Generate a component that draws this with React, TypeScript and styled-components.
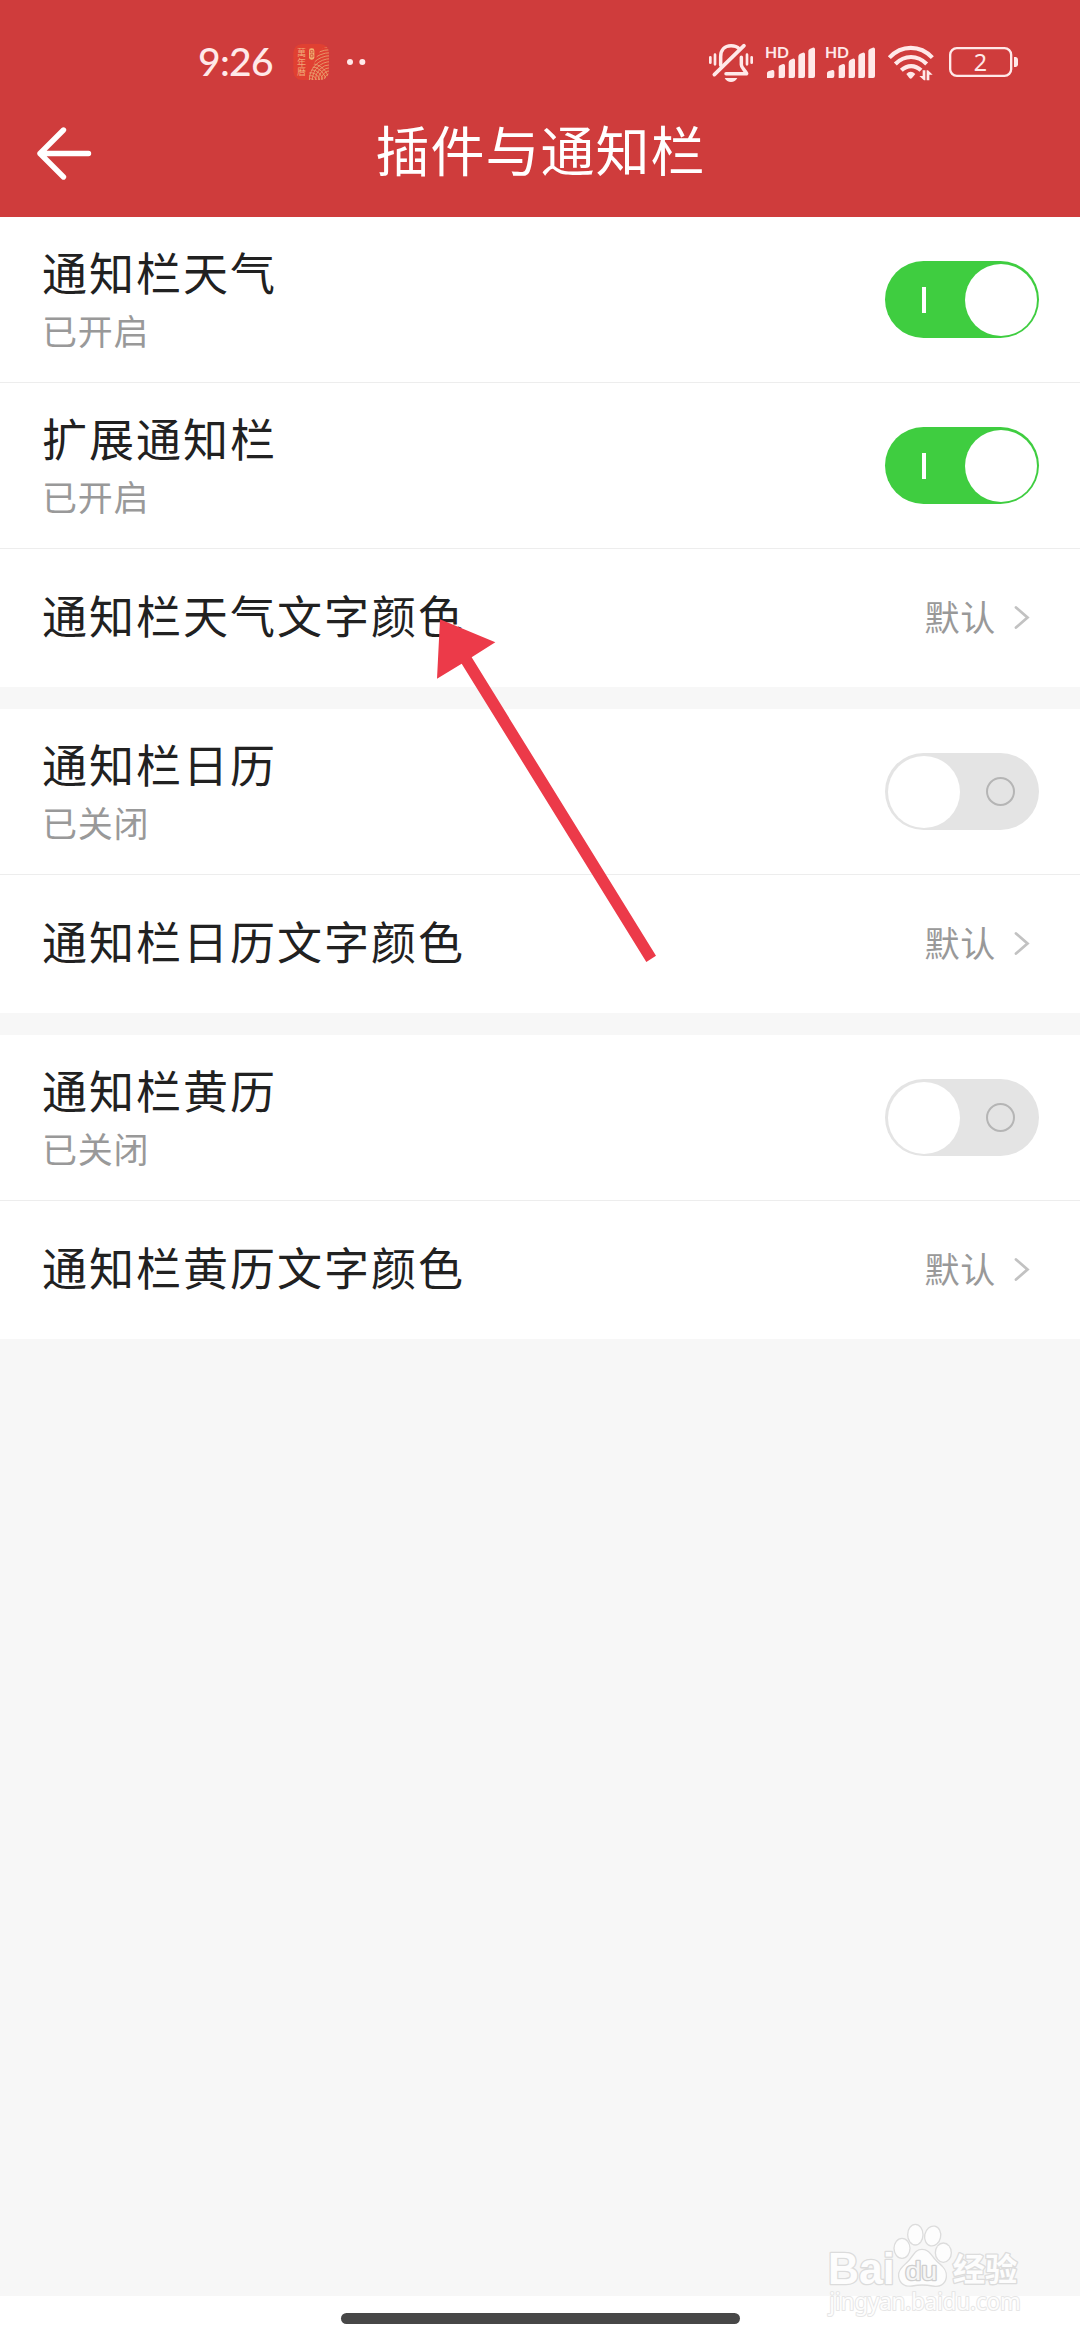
import React from "react";
import styled, { createGlobalStyle } from "styled-components";

const sans = `"Noto Sans CJK SC", "Noto Sans", sans-serif`;
const ink = "#ffe9e9";

const GlobalStyle = createGlobalStyle`
  * { box-sizing: border-box; }
  body { margin: 0; background: #f7f7f7; font-family: ${sans}; }
`;

const Screen = styled.div`
  position: relative;
  width: 1080px;
  height: 2340px;
  display: flex;
  flex-direction: column;
  background: #f7f7f7;
  overflow: hidden;
`;

const Header = styled.header`
  height: 217px;
  background: #cf3c3c;
  display: flex;
  flex-direction: column;
`;

const StatusBar = styled.div`
  height: 100px;
  padding: 30px 60px 0 198px;
  display: flex;
  align-items: flex-start;
`;

const Clock = styled.span`
  width: 92px;
  height: 70px;
  font: 500 39px/62px Lato, sans-serif;
  letter-spacing: -0.7px;
  color: ${ink};
`;

const StatusGlyph = styled.svg<{ $width: number; $gap?: number }>`
  display: block;
  flex: none;
  width: ${(p) => p.$width}px;
  height: 70px;
  margin-left: ${(p) => p.$gap ?? 0}px;
`;

const Spacer = styled.div`
  flex: 1;
`;

const TitleBar = styled.div`
  height: 117px;
  display: grid;
  grid-template-columns: 120px 1fr 120px;
`;

const BackButton = styled.button`
  padding: 23px 0 0 33px;
  border: 0;
  background: none;
  display: flex;
  align-items: flex-start;
`;

const Title = styled.h1`
  margin: 0;
  padding-left: 1px;
  text-align: center;
  font: 400 54px/98px ${sans};
  letter-spacing: 1px;
  color: #fff;
`;

const Main = styled.main`
  flex: 1;
  display: flex;
  flex-direction: column;
  gap: 22px;
`;

const Group = styled.section`
  background: #fff;
  display: flex;
  flex-direction: column;
`;

const Row = styled.div<{ $tall?: boolean }>`
  height: ${(p) => (p.$tall ? 166 : 138)}px;
  padding: 0 41px 0 42px;
  display: flex;
  align-items: center;
  justify-content: space-between;
  border-bottom: ${(p) => (p.$tall ? "1px solid #ededed" : "0")};
`;

const Labels = styled.div`
  display: flex;
  flex-direction: column;
`;

const Label = styled.span<{ $single?: boolean }>`
  font: 400 45px/60px ${sans};
  letter-spacing: 2px;
  color: #212121;
  padding-bottom: ${(p) => (p.$single ? 6 : 0)}px;
`;

const Note = styled.span`
  font: 400 35px/55px ${sans};
  letter-spacing: 0.8px;
  color: #999;
`;

const Value = styled.span`
  display: flex;
  align-items: center;
  gap: 18px;
  padding: 0 9px 1px 0;
`;

const ValueText = styled.span`
  padding-bottom: 4px;
  font: 400 35px/52px ${sans};
  letter-spacing: 0.8px;
  color: #999;
`;

const Switch = styled.div<{ $on: boolean }>`
  width: 154px;
  height: 77px;
  border-radius: 39px;
  display: flex;
  flex-direction: ${(p) => (p.$on ? "row" : "row-reverse")};
  align-items: center;
  background: ${(p) => (p.$on ? "#3fcd40" : "#e4e4e4")};
`;

const Mark = styled.div`
  width: 77px;
  display: flex;
  justify-content: center;
`;

const OnMark = styled.i`
  width: 4px;
  height: 26px;
  background: #fff;
`;

const OffMark = styled.i`
  width: 29px;
  height: 29px;
  border: 2.5px solid #b5b5b5;
  border-radius: 50%;
`;

const Knob = styled.div`
  width: 72px;
  height: 72px;
  margin: 0 2.5px;
  border-radius: 50%;
  background: #fff;
`;

const NavArea = styled.footer`
  height: 44px;
  background: #fff;
  display: flex;
  justify-content: center;
  padding-top: 17px;
`;

const HomeBar = styled.div`
  width: 399px;
  height: 11px;
  border-radius: 6px;
  background: #474747;
`;

const Pointer = styled.svg`
  position: absolute;
  left: 400px;
  top: 560px;
`;

const Watermark = styled.svg`
  position: absolute;
  left: 800px;
  top: 2200px;
`;

function AppBadge() {
  const rings = Array.from({ length: 11 }, (_, i) => 10 + i * 9);
  return (
    <StatusGlyph $width={42} $gap={0} viewBox="330 0 126 210">
      <clipPath id="badge">
        <rect x="340" y="42" width="107" height="108" rx="26" />
      </clipPath>
      <clipPath id="hill">
        <path d="M386 150V130C400 116 402 96 412 76C422 56 434 50 447 50V150Z" />
      </clipPath>
      <rect x="340" y="42" width="107" height="108" rx="26" fill="#e04032" />
      <g clipPath="url(#badge)">
        <g clipPath="url(#hill)" fill="none" stroke="#e8a070" strokeWidth="2.6">
          {rings.map((r) => (
            <circle key={r} cx="452" cy="150" r={r} />
          ))}
          {rings.slice(0, 6).map((r) => (
            <circle key={r} cx="392" cy="156" r={r} />
          ))}
        </g>
      </g>
      <rect x="387" y="55" width="16" height="34" rx="7" fill="#f0b070" />
      <path d="M391 62h8v7h-8zM391 74h8v7h-8z" fill="none" stroke="#d4503a" strokeWidth="2.5" />
      <g fill="#f0a878" fontSize="27" fontFamily='"Noto Sans CJK SC", sans-serif'>
        <text x="351" y="78">萬</text>
        <text x="351" y="107">年</text>
        <text x="351" y="136">曆</text>
      </g>
    </StatusGlyph>
  );
}

function MutedBell() {
  return (
    <StatusGlyph $width={50} viewBox="51 0 150 210">
      <g fill="none" stroke={ink} strokeWidth="10.5" strokeLinecap="round" strokeLinejoin="round">
        <path d="M92 106V80C92 60 104 47 123 47C134 47 142 50 147 56" />
        <path d="M154 82V104C154 113 163 118 170 131H108" />
        <path d="M73 134L162 47" strokeWidth="11" />
        <path d="M61 82v16M75 74v29M171 74v29M185 82v16" strokeWidth="8" />
      </g>
      <path d="M104 144H142C138 152 131 156 123 156S108 152 104 144Z" fill={ink} />
    </StatusGlyph>
  );
}

function Signal({ gap }: { gap: number }) {
  return (
    <StatusGlyph $width={54} $gap={gap} viewBox="219 0 162 210">
      <text x="225" y="84" fill={ink} fontFamily="Lato, sans-serif" fontSize="48" fontWeight="700" textLength="72" lengthAdjust="spacingAndGlyphs">
        HD
      </text>
      <path
        fill={ink}
        d="M231 144V130Q231 126 235 124L247 120Q253 119 253 125V138Q253 144 247 144ZM266 144V112Q266 108 270 106L279 102Q285 101 285 107V138Q285 144 279 144ZM296 144V98Q296 93 300 90L308 86Q315 84 315 91V138Q315 144 309 144ZM325 144V80Q325 75 329 72L338 68Q345 66 345 73V138Q345 144 339 144ZM355 144V64Q355 59 359 57L368 53Q375 51 375 58V138Q375 144 369 144Z"
      />
    </StatusGlyph>
  );
}

function Wifi() {
  return (
    <StatusGlyph $width={50} $gap={10} viewBox="591 0 150 210">
      <g fill="none" stroke={ink} strokeWidth="12.5">
        <path d="M598 83C635 44 690 44 727 83" />
        <path d="M616 102C644 74 682 74 710 102" />
        <path d="M634 121C652 104 675 104 693 121" />
      </g>
      <path fill={ink} d="M649 132Q662 119 676 132L666 144Q662 148 658 144Z" />
      <path fill={ink} d="M698 121H706V151H702L688 138H698ZM710 151V121H714L728 134H718V151Z" />
    </StatusGlyph>
  );
}

function Battery() {
  return (
    <StatusGlyph $width={74} $gap={9} viewBox="768 0 222 210">
      <rect x="780.5" y="54.5" width="183" height="83" rx="20" fill="none" stroke={ink} strokeWidth="7" />
      <path fill={ink} d="M972 81H978Q984 83 984 89V103Q984 109 978 111H972Z" />
      <text x="871" y="123" textAnchor="middle" fill={ink} fontFamily='"Noto Sans", sans-serif' fontSize="70">
        2
      </text>
    </StatusGlyph>
  );
}

function Toggle({ on }: { on: boolean }) {
  return (
    <Switch $on={on} role="switch" aria-checked={on}>
      <Mark>{on ? <OnMark /> : <OffMark />}</Mark>
      <Knob />
    </Switch>
  );
}

function SwitchRow({ label, on }: { label: string; on: boolean }) {
  return (
    <Row $tall>
      <Labels>
        <Label>{label}</Label>
        <Note>{on ? "已开启" : "已关闭"}</Note>
      </Labels>
      <Toggle on={on} />
    </Row>
  );
}

function ColorRow({ label }: { label: string }) {
  return (
    <Row>
      <Label $single>{label}</Label>
      <Value>
        <ValueText>默认</ValueText>
        <svg width="16" height="25" viewBox="0 0 16 25" fill="none" stroke="#c2c2c2" strokeWidth="2.8" strokeLinecap="round">
          <path d="M2 2.5L13.5 12.5L2 22.5" />
        </svg>
      </Value>
    </Row>
  );
}

export default function App() {
  return (
    <Screen>
      <GlobalStyle />
      <Header>
        <StatusBar>
          <Clock>9:26</Clock>
          <AppBadge />
          <StatusGlyph $width={24} $gap={12} viewBox="492 0 72 210">
            <circle cx="510" cy="96" r="9" fill={ink} />
            <circle cx="547" cy="96" r="9" fill={ink} />
          </StatusGlyph>
          <Spacer />
          <MutedBell />
          <Signal gap={6} />
          <Signal gap={6} />
          <Wifi />
          <Battery />
        </StatusBar>
        <TitleBar>
          <BackButton aria-label="返回">
            <svg width="60" height="60" viewBox="0 0 60 60" fill="none" stroke="#fff" strokeWidth="5.4" strokeLinecap="round" strokeLinejoin="round">
              <path d="M30.5 7L7 30.5L30.5 54M7 30.5H55.5" />
            </svg>
          </BackButton>
          <Title>插件与通知栏</Title>
        </TitleBar>
      </Header>
      <Main>
        <Group>
          <SwitchRow label="通知栏天气" on />
          <SwitchRow label="扩展通知栏" on />
          <ColorRow label="通知栏天气文字颜色" />
        </Group>
        <Group>
          <SwitchRow label="通知栏日历" on={false} />
          <ColorRow label="通知栏日历文字颜色" />
        </Group>
        <Group>
          <SwitchRow label="通知栏黄历" on={false} />
          <ColorRow label="通知栏黄历文字颜色" />
        </Group>
      </Main>
      <NavArea>
        <HomeBar />
      </NavArea>
      <Pointer width="280" height="420" viewBox="0 0 840 1260">
        <path d="M120 178L286 247L215 292L768 1187L739 1206L185 311L111 356Z" fill="#ec3a49" />
      </Pointer>
      <Watermark width="280" height="140" viewBox="0 0 840 420">
        <g fill="#fdfdfd" stroke="#dcdcdc" strokeWidth="8" paintOrder="stroke" strokeLinejoin="round">
          <text x="84" y="252" fontFamily='"Liberation Sans", sans-serif' fontWeight="700" fontSize="131" textLength="200" lengthAdjust="spacingAndGlyphs">
            Bai
          </text>
          <ellipse cx="306" cy="145" rx="22" ry="28" />
          <ellipse cx="346" cy="104" rx="21" ry="29" />
          <ellipse cx="398" cy="108" rx="22" ry="28" transform="rotate(12 398 108)" />
          <ellipse cx="430" cy="158" rx="22" ry="27" />
          <path d="M366 150C388 150 394 172 412 188C430 202 440 214 437 232C434 252 418 260 398 256C378 252 356 252 336 256C316 259 301 250 298 230C296 212 308 202 322 189C340 174 344 150 366 150Z" />
          <text x="458" y="243" fontFamily='"Noto Sans CJK SC", sans-serif' fontWeight="700" fontSize="97">
            经验
          </text>
          <text x="88" y="331" fontFamily='"Noto Sans", sans-serif' fontSize="68" strokeWidth="6" stroke="#e6e6e6" textLength="574" lengthAdjust="spacingAndGlyphs">
            jingyan.baidu.com
          </text>
          <text x="316" y="239" fontFamily='"Liberation Sans", sans-serif' fontSize="80" fill="#f6f6f6" stroke="#cfcfcf" strokeWidth="8" textLength="96" lengthAdjust="spacingAndGlyphs">
            du
          </text>
        </g>
      </Watermark>
    </Screen>
  );
}
